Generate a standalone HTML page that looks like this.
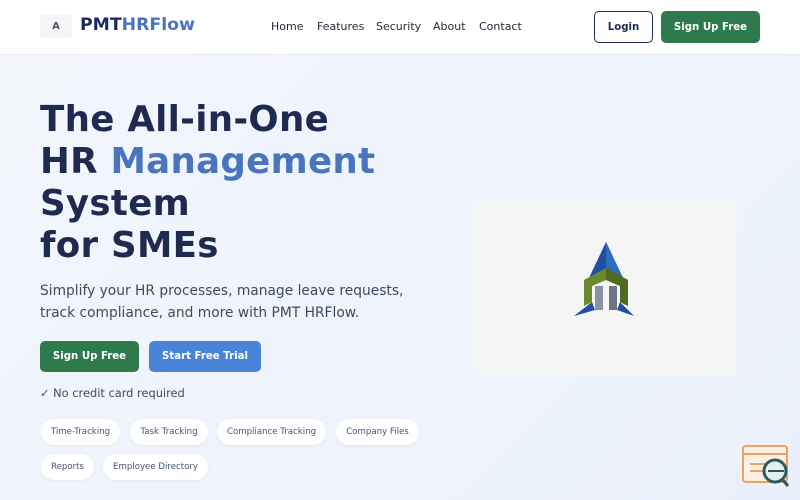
<!DOCTYPE html>
<html><head><meta charset="utf-8"><style>
*{margin:0;padding:0;box-sizing:border-box}
body{width:800px;height:500px;overflow:hidden;font-family:"DejaVu Sans","Liberation Sans",sans-serif;background:linear-gradient(135deg,#f3f6fb 0%,#eef3fc 60%,#eaf0fb 100%);position:relative}
.hdr{position:absolute;left:0;top:0;width:800px;height:55px;background:#fff;border-bottom:1px solid #e8ecf2}
.a{position:absolute;white-space:nowrap}
.nav{font-size:11px;color:#1f2937;top:20px}
h1{position:absolute;left:40px;top:99px;font-size:35.6px;line-height:42px;font-weight:bold;color:#1e2a4f;letter-spacing:0.3px}
h1 span{color:#4a74bd}
.btn{position:absolute;border-radius:5px;color:#fff;font-weight:bold;font-size:10.2px;display:flex;align-items:center;justify-content:center}
.tag{position:absolute;height:26px;border-radius:13px;background:#fff;font-size:8.6px;color:#475569;display:flex;align-items:center;justify-content:center;box-shadow:0 1px 3px rgba(0,0,0,.05)}
</style></head><body>
<div class="hdr">
 <div class="a" style="left:40px;top:15px;width:32px;height:23px;background:#f4f5f7;border-radius:3px;font-size:10px;color:#556;text-align:center;line-height:23px;font-weight:bold">A</div>
 <div class="a" style="left:80px;top:15px;font-size:17.3px;font-weight:bold;color:#1e2a5a">PMT<span style="color:#4a74bd">HRFlow</span></div>
 <div class="a nav" style="left:271px">Home</div>
 <div class="a nav" style="left:317px">Features</div>
 <div class="a nav" style="left:376px">Security</div>
 <div class="a nav" style="left:433px">About</div>
 <div class="a nav" style="left:479px">Contact</div>
 <div class="btn" style="left:594px;top:11px;width:59px;height:32px;border:1.5px solid #1e2a5a;color:#1e2a5a;background:#fff">Login</div>
 <div class="btn" style="left:661px;top:11px;width:99px;height:32px;background:#2e7a4d">Sign Up Free</div>
</div>
<h1>The All-in-One<br>HR <span>Management</span><br>System<br>for SMEs</h1>
<div class="a" style="left:40px;top:281px;font-size:13.8px;line-height:21.5px;color:#3f4a5e">Simplify your HR processes, manage leave requests,<br>track compliance, and more with PMT HRFlow.</div>
<div class="btn" style="left:40px;top:341px;width:99px;height:31px;background:#2e7a4d">Sign Up Free</div>
<div class="btn" style="left:149px;top:341px;width:112px;height:31px;background:#4a84d8">Start Free Trial</div>
<div class="a" style="left:40px;top:386px;font-size:11.4px;color:#3f4a5e">✓ No credit card required</div>
<div class="tag" style="left:41px;top:419px;width:79px">Time-Tracking</div>
<div class="tag" style="left:130px;top:419px;width:78px">Task Tracking</div>
<div class="tag" style="left:217px;top:419px;width:109px">Compliance Tracking</div>
<div class="tag" style="left:336px;top:419px;width:83px">Company Files</div>
<div class="tag" style="left:41px;top:454px;width:53px">Reports</div>
<div class="tag" style="left:103px;top:454px;width:105px">Employee Directory</div>
<div class="a" style="left:474px;top:200px;width:263px;height:175px;background:#f5f5f5;border-radius:4px"></div>
<svg class="a" style="left:570px;top:240px" width="70" height="80" viewBox="0 0 70 80">
 <polygon points="36,2 54,40 36,30 18,40" fill="#1f4fa0"/>
 <polygon points="36,2 54,40 36,30" fill="#2e6cc0"/>
 <polygon points="14,40 36,28 58,40 58,66 50,62 50,46 36,40 22,46 22,62 14,66" fill="#6b8a2e"/>
 <polygon points="36,28 58,40 58,66 50,62 50,46 36,40" fill="#4f6a1e"/>
 <rect x="25" y="46" width="8" height="24" fill="#8a93a0"/>
 <rect x="39" y="46" width="8" height="24" fill="#6d7682"/>
 <polygon points="4,76 22,62 25,70" fill="#1f4fa0"/>
 <polygon points="64,76 50,62 47,70" fill="#1f4fa0"/>
</svg>
<svg class="a" style="left:740px;top:444px" width="52" height="46" viewBox="0 0 52 46">
 <rect x="3" y="2" width="44" height="36" rx="3" fill="#fdf1e6" stroke="#f0a060" stroke-width="2"/>
 <line x1="3" y1="10" x2="47" y2="10" stroke="#f0a060" stroke-width="2"/>
 <line x1="10" y1="20" x2="30" y2="20" stroke="#f0a060" stroke-width="2"/>
 <line x1="10" y1="27" x2="28" y2="27" stroke="#f0a060" stroke-width="2"/>
 <circle cx="35" cy="27" r="11" fill="#e6eef0" stroke="#2e5a5e" stroke-width="3"/>
 <line x1="28" y1="27" x2="44" y2="27" stroke="#2e5a5e" stroke-width="2"/>
 <line x1="43" y1="36" x2="48" y2="42" stroke="#2e5a5e" stroke-width="3"/>
</svg>
</body></html>
